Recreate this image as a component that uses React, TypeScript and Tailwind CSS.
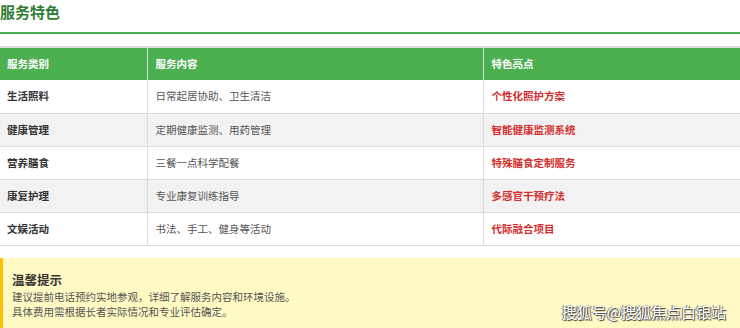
const rows = [
  { type: '生活照料', content: '日常起居协助、卫生清洁', highlight: '个性化照护方案' },
  { type: '健康管理', content: '定期健康监测、用药管理', highlight: '智能健康监测系统' },
  { type: '营养膳食', content: '三餐一点科学配餐', highlight: '特殊膳食定制服务' },
  { type: '康复护理', content: '专业康复训练指导', highlight: '多感官干预疗法' },
  { type: '文娱活动', content: '书法、手工、健身等活动', highlight: '代际融合项目' },
]

export default function App() {
  return (
    <div
      className="relative w-[740px] h-[328px] overflow-hidden bg-white"
      style={{ fontFamily: '"Noto Sans CJK SC", "Noto Sans", sans-serif' }}
    >
      {/* section title */}
      <div className="h-[34px] border-b-2 border-[#4caf50] pt-[2px]">
        <h2 className="text-[15px] leading-[20px] font-bold text-[#2e7d32]">服务特色</h2>
      </div>

      {/* table */}
      <table className="mt-[12px] w-full border-collapse text-left">
        <thead>
          <tr className="bg-[#4caf50] text-white h-[33px] border-t-2 border-[#dddddd]">
            <th className="w-[147px] pl-[7px] text-[10.5px] font-bold border-r border-[#dddddd]">服务类别</th>
            <th className="w-[336px] pl-[8px] text-[10.5px] font-bold border-r border-[#dddddd]">服务内容</th>
            <th className="pl-[8px] text-[10.5px] font-bold">特色亮点</th>
          </tr>
        </thead>
        <tbody>
          {rows.map((r, i) => (
            <tr key={r.type} className={`h-[33px] border-b border-[#dddddd] ${i % 2 === 1 ? 'bg-[#f2f2f2]' : 'bg-white'}`}>
              <td className="pl-[7px] text-[10.5px] font-bold text-[#333333] border-r border-[#dddddd]">{r.type}</td>
              <td className="pl-[8px] text-[10.5px] text-[#555555] border-r border-[#dddddd]">{r.content}</td>
              <td className="pl-[8px] text-[10.5px] font-bold text-[#d32f2f]">{r.highlight}</td>
            </tr>
          ))}
        </tbody>
      </table>

      {/* tip box */}
      <div className="mt-[12px] h-[80px] bg-[#fff9c4] border-l-[3px] border-[#ffc107] pl-[9px] pt-[13px]">
        <p className="text-[12.5px] leading-[17px] font-bold text-[#333333]">温馨提示</p>
        <p className="mt-[1px] text-[10.5px] leading-[15px] text-[#555555]">建议提前电话预约实地参观，详细了解服务内容和环境设施。</p>
        <p className="text-[10.5px] leading-[15px] text-[#555555]">具体费用需根据长者实际情况和专业评估确定。</p>
      </div>

      {/* watermark */}
      <div
        className="absolute right-[14px] bottom-[7px] text-[15px] leading-[19px] text-white"
        style={{ textShadow: '1px 1px 1px #333, -1px 0 1px #555' }}
      >
        搜狐号@搜狐焦点白银站
      </div>
    </div>
  )
}
